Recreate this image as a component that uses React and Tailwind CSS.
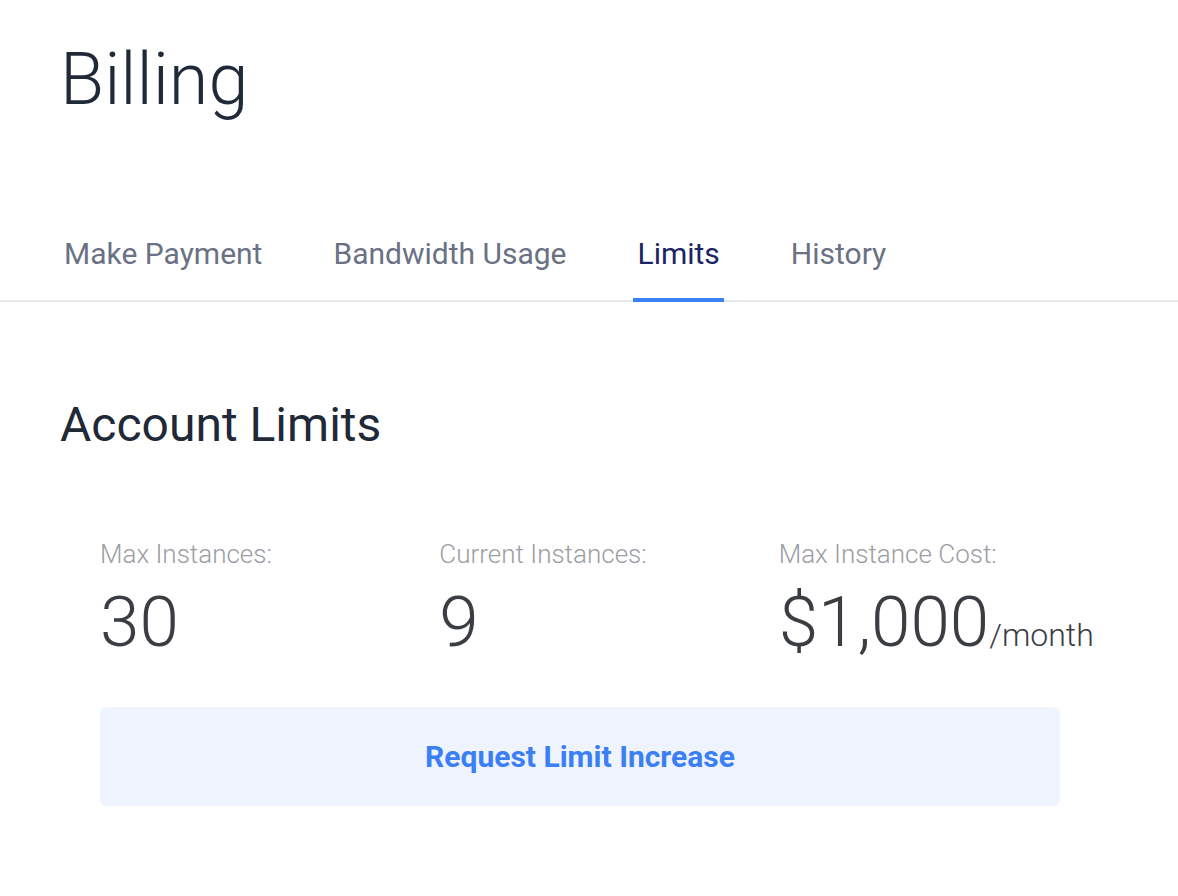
import { useState } from 'react'

const tabs = ['Make Payment', 'Bandwidth Usage', 'Limits', 'History']

const limits = [
  { label: 'Max Instances:', value: '30' },
  { label: 'Current Instances:', value: '9' },
  { label: 'Max Instance Cost:', value: '$1,000', unit: '/month' },
]

export default function App() {
  const [active, setActive] = useState('Limits')

  return (
    <div className="min-h-screen bg-white font-['Roboto',sans-serif]">
      <div className="pt-[44px]">
        <h1 className="px-[60px] text-[72px] leading-[72px] font-light text-[#1f2937]">Billing</h1>

        <nav className="mt-[124px] flex gap-[63px] border-b-2 border-[#e5e7eb] px-[60px]">
          {tabs.map(t => (
            <button key={t} onClick={() => setActive(t)}
              className={`-mb-[2px] border-b-4 px-[4px] pb-[30px] text-[30px] leading-[28px] ${
                active === t ? 'border-[#3b82f6] text-[#1b2566]' : 'border-transparent text-[#6b7185]'
              }`}>
              {t}
            </button>
          ))}
        </nav>

        <div className="px-[60px] pt-[99px]">
          <h2 className="text-[48px] leading-[48px] text-[#1f2937]">Account Limits</h2>

          <div className="mt-[92px] pl-[40px]">
            <div className="flex">
              {limits.map(l => (
                <div key={l.label} className="w-[340px]">
                  <p className="text-[26px] leading-[26px] font-light text-[#9a9ea4]">{l.label}</p>
                  <p className="mt-[19px] text-[71px] leading-[71px] font-light text-[#3a3d42]">
                    {l.value}
                    {l.unit && <span className="text-[32px]">{l.unit}</span>}
                  </p>
                </div>
              ))}
            </div>

            <button className="mt-[36px] flex h-[99px] w-[960px] items-center justify-center rounded-md bg-[#eef3fe] text-[30px] font-bold text-[#3b7ff5]">
              Request Limit Increase
            </button>
          </div>
        </div>
      </div>
    </div>
  )
}
